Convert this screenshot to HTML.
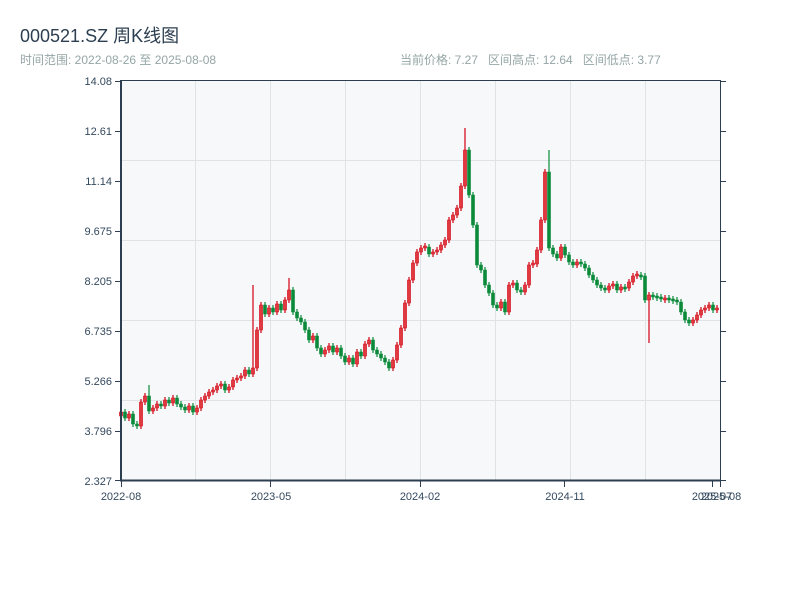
<!DOCTYPE html>
<html><head><meta charset="utf-8">
<style>
html,body{margin:0;padding:0;background:#fff;width:800px;height:600px;overflow:hidden;font-family:"Liberation Sans","Noto Sans CJK SC",sans-serif;}
.t{position:absolute;left:20px;top:22px;font-size:18px;color:#2c3e50;}
.s{position:absolute;left:20px;top:51px;font-size:12px;color:#95a5a6;}
.r{position:absolute;left:400px;top:51px;font-size:12px;color:#95a5a6;}
svg{position:absolute;left:0;top:0;}
text{font-family:"Liberation Sans",sans-serif;font-size:11px;fill:#34495e;}
</style></head><body>
<div class="t">000521.SZ 周K线图</div>
<div class="s">时间范围: 2022-08-26 至 2025-08-08</div>
<div class="r">当前价格: 7.27&nbsp;&nbsp; 区间高点: 12.64&nbsp;&nbsp; 区间低点: 3.77</div>
<svg width="800" height="600" xmlns="http://www.w3.org/2000/svg">
<rect x="121" y="81" width="599" height="399" fill="#f7f8fa"/>
<g stroke="#dfe3e8" stroke-width="1">
<line x1="195.5" y1="81" x2="195.5" y2="480"/><line x1="270.5" y1="81" x2="270.5" y2="480"/>
<line x1="345.5" y1="81" x2="345.5" y2="480"/><line x1="420.5" y1="81" x2="420.5" y2="480"/>
<line x1="495.5" y1="81" x2="495.5" y2="480"/><line x1="570.5" y1="81" x2="570.5" y2="480"/>
<line x1="645.5" y1="81" x2="645.5" y2="480"/>
<line x1="121" y1="160.5" x2="720" y2="160.5"/><line x1="121" y1="240.5" x2="720" y2="240.5"/>
<line x1="121" y1="320.5" x2="720" y2="320.5"/><line x1="121" y1="400.5" x2="720" y2="400.5"/>
</g>
<path fill="none" stroke="#d0000f" stroke-width="1.2" d="M121 409V419 M129 411V421 M141 399V429 M145 393V405 M153 405V414 M157 401V411 M165 397V409 M173 395V406 M189 403V413 M197 405V415 M201 397V411 M205 393V403 M209 389V399 M213 387V395 M217 383V393 M221 381V389 M229 384V393 M233 377V390 M237 375V383 M241 373V381 M245 367V379 M253 285V377 M257 327V371 M261 302V333 M269 305V317 M277 301V315 M285 297V313 M289 278V303 M313 333V343 M325 347V357 M329 343V353 M337 345V355 M349 355V365 M357 349V367 M365 341V359 M369 337V347 M393 357V371 M397 342V363 M401 325V348 M405 300V331 M409 277V306 M413 260V283 M417 249V266 M421 245V255 M425 243V251 M433 249V257 M437 247V255 M441 242V253 M445 237V248 M449 217V243 M453 212V223 M457 205V218 M461 183V211 M465 128V189 M501 299V311 M509 282V315 M513 280V288 M525 282V295 M529 262V288 M533 260V268 M537 247V267 M541 217V253 M545 169V223 M561 244V261 M577 259V268 M609 283V293 M613 281V289 M621 284V293 M629 279V291 M633 273V285 M637 271V279 M649 292V343 M665 295V303 M693 317V326 M697 312V323 M701 307V318 M705 305V313 M709 302V311 M717 305V313"/>
<path fill="#e03a40" stroke="#d0000f" stroke-width="0.6" d="M119.5 412h3v4h-3z M127.5 414h3v4h-3z M139.5 402h3v24h-3z M143.5 396h3v6h-3z M151.5 408h3v3h-3z M155.5 404h3v4h-3z M163.5 400h3v6h-3z M171.5 398h3v5h-3z M187.5 406h3v4h-3z M195.5 408h3v4h-3z M199.5 400h3v8h-3z M203.5 396h3v4h-3z M207.5 392h3v4h-3z M211.5 390h3v2h-3z M215.5 386h3v4h-3z M219.5 384h3v2h-3z M227.5 387h3v3h-3z M231.5 380h3v7h-3z M235.5 378h3v2h-3z M239.5 376h3v2h-3z M243.5 370h3v6h-3z M251.5 368h3v6h-3z M255.5 330h3v38h-3z M259.5 305h3v25h-3z M267.5 308h3v6h-3z M275.5 304h3v8h-3z M283.5 300h3v10h-3z M287.5 290h3v10h-3z M311.5 336h3v4h-3z M323.5 350h3v4h-3z M327.5 346h3v4h-3z M335.5 348h3v4h-3z M347.5 358h3v4h-3z M355.5 352h3v12h-3z M363.5 344h3v12h-3z M367.5 340h3v4h-3z M391.5 360h3v8h-3z M395.5 345h3v15h-3z M399.5 328h3v17h-3z M403.5 303h3v25h-3z M407.5 280h3v23h-3z M411.5 263h3v17h-3z M415.5 252h3v11h-3z M419.5 248h3v4h-3z M423.5 246h3v2h-3z M431.5 252h3v2h-3z M435.5 250h3v2h-3z M439.5 245h3v5h-3z M443.5 240h3v5h-3z M447.5 220h3v20h-3z M451.5 215h3v5h-3z M455.5 208h3v7h-3z M459.5 186h3v22h-3z M463.5 150h3v36h-3z M499.5 302h3v6h-3z M507.5 285h3v27h-3z M511.5 283h3v2h-3z M523.5 285h3v7h-3z M527.5 265h3v20h-3z M531.5 263h3v2h-3z M535.5 250h3v14h-3z M539.5 220h3v30h-3z M543.5 172h3v48h-3z M559.5 247h3v11h-3z M575.5 262h3v3h-3z M607.5 286h3v4h-3z M611.5 284h3v2h-3z M619.5 287h3v3h-3z M627.5 282h3v6h-3z M631.5 276h3v6h-3z M635.5 274h3v2h-3z M647.5 295h3v5h-3z M663.5 298h3v2h-3z M691.5 320h3v3h-3z M695.5 315h3v5h-3z M699.5 310h3v5h-3z M703.5 308h3v2h-3z M707.5 305h3v3h-3z M715.5 308h3v2h-3z"/>
<path fill="none" stroke="#0b8a3a" stroke-width="1.2" d="M125 409V421 M133 411V427 M137 421V429 M149 385V414 M161 401V409 M169 397V406 M177 395V407 M181 401V410 M185 404V413 M193 403V415 M225 381V393 M249 367V377 M265 302V317 M273 305V315 M281 301V313 M293 287V315 M297 309V321 M301 315V325 M305 319V333 M309 327V343 M317 333V351 M321 345V357 M333 343V355 M341 345V359 M345 353V365 M353 355V367 M361 349V359 M373 337V353 M377 347V357 M381 351V361 M385 355V365 M389 359V371 M429 244V257 M469 147V198 M473 192V228 M477 222V268 M481 262V273 M485 267V288 M489 282V296 M493 290V308 M497 302V311 M505 299V315 M517 280V293 M521 287V295 M549 150V251 M553 245V257 M557 251V261 M565 244V258 M569 252V265 M573 259V268 M581 259V267 M585 261V271 M589 265V278 M593 272V283 M597 277V288 M601 282V291 M605 285V293 M617 281V293 M625 284V292 M641 272V280 M645 273V303 M653 292V300 M657 293V301 M661 294V302 M669 295V303 M673 296V304 M677 297V305 M681 299V315 M685 309V323 M689 317V326 M713 302V313"/>
<path fill="#0b8a3a" stroke="#0b8a3a" stroke-width="0.6" d="M123.5 412h3v6h-3z M131.5 414h3v10h-3z M135.5 424h3v2h-3z M147.5 396h3v15h-3z M159.5 404h3v2h-3z M167.5 400h3v3h-3z M175.5 398h3v6h-3z M179.5 404h3v3h-3z M183.5 407h3v3h-3z M191.5 406h3v6h-3z M223.5 384h3v6h-3z M247.5 370h3v4h-3z M263.5 305h3v9h-3z M271.5 308h3v4h-3z M279.5 304h3v6h-3z M291.5 290h3v22h-3z M295.5 312h3v6h-3z M299.5 318h3v4h-3z M303.5 322h3v8h-3z M307.5 330h3v10h-3z M315.5 336h3v12h-3z M319.5 348h3v6h-3z M331.5 346h3v6h-3z M339.5 348h3v8h-3z M343.5 356h3v6h-3z M351.5 358h3v6h-3z M359.5 352h3v4h-3z M371.5 340h3v10h-3z M375.5 350h3v4h-3z M379.5 354h3v4h-3z M383.5 358h3v4h-3z M387.5 362h3v6h-3z M427.5 247h3v7h-3z M467.5 150h3v45h-3z M471.5 195h3v30h-3z M475.5 225h3v40h-3z M479.5 265h3v5h-3z M483.5 270h3v15h-3z M487.5 285h3v8h-3z M491.5 293h3v12h-3z M495.5 305h3v3h-3z M503.5 302h3v10h-3z M515.5 283h3v7h-3z M519.5 290h3v2h-3z M547.5 172h3v76h-3z M551.5 248h3v6h-3z M555.5 254h3v4h-3z M563.5 247h3v8h-3z M567.5 255h3v7h-3z M571.5 262h3v3h-3z M579.5 262h3v2h-3z M583.5 264h3v4h-3z M587.5 268h3v7h-3z M591.5 275h3v5h-3z M595.5 280h3v5h-3z M599.5 285h3v3h-3z M603.5 288h3v2h-3z M615.5 284h3v6h-3z M623.5 287h3v2h-3z M639.5 275h3v2h-3z M643.5 276h3v24h-3z M651.5 295h3v2h-3z M655.5 296h3v2h-3z M659.5 297h3v2h-3z M667.5 298h3v2h-3z M671.5 299h3v2h-3z M675.5 300h3v2h-3z M679.5 302h3v10h-3z M683.5 312h3v8h-3z M687.5 320h3v3h-3z M711.5 305h3v5h-3z"/>
<g stroke="#2c3e50">
<line x1="121" y1="80.5" x2="720" y2="80.5" stroke-width="1"/>
<line x1="121" y1="80" x2="121" y2="481" stroke-width="2"/>
<line x1="720.5" y1="80" x2="720.5" y2="481" stroke-width="1"/>
<line x1="120" y1="480.5" x2="721" y2="480.5" stroke-width="2"/>
<g stroke-width="1">
<line x1="115" y1="81.5" x2="121" y2="81.5"/><line x1="115" y1="131.5" x2="121" y2="131.5"/>
<line x1="115" y1="181.5" x2="121" y2="181.5"/><line x1="115" y1="231.5" x2="121" y2="231.5"/>
<line x1="115" y1="281.5" x2="121" y2="281.5"/><line x1="115" y1="331.5" x2="121" y2="331.5"/>
<line x1="115" y1="381.5" x2="121" y2="381.5"/><line x1="115" y1="431.5" x2="121" y2="431.5"/>
<line x1="115" y1="480.5" x2="121" y2="480.5"/>
<line x1="720" y1="81.5" x2="726" y2="81.5"/><line x1="720" y1="131.5" x2="726" y2="131.5"/>
<line x1="720" y1="181.5" x2="726" y2="181.5"/><line x1="720" y1="231.5" x2="726" y2="231.5"/>
<line x1="720" y1="281.5" x2="726" y2="281.5"/><line x1="720" y1="331.5" x2="726" y2="331.5"/>
<line x1="720" y1="381.5" x2="726" y2="381.5"/><line x1="720" y1="431.5" x2="726" y2="431.5"/>
<line x1="720" y1="480.5" x2="726" y2="480.5"/>
<line x1="121.5" y1="481" x2="121.5" y2="487"/><line x1="270.5" y1="481" x2="270.5" y2="487"/>
<line x1="420.5" y1="481" x2="420.5" y2="487"/><line x1="564.5" y1="481" x2="564.5" y2="487"/>
<line x1="712.5" y1="481" x2="712.5" y2="487"/><line x1="720.5" y1="481" x2="720.5" y2="487"/>
</g></g>
<g text-anchor="end">
<text x="112" y="85">14.08</text><text x="112" y="135">12.61</text><text x="112" y="185">11.14</text>
<text x="112" y="235">9.675</text><text x="112" y="285">8.205</text><text x="112" y="335">6.735</text>
<text x="112" y="385">5.266</text><text x="112" y="435">3.796</text><text x="112" y="485">2.327</text>
</g>
<g text-anchor="middle">
<text x="121" y="500">2022-08</text><text x="271" y="500">2023-05</text><text x="420" y="500">2024-02</text>
<text x="565" y="500">2024-11</text><text x="712" y="500">2025-07</text><text x="721" y="500">2025-08</text>
</g>
</svg>
</body></html>
